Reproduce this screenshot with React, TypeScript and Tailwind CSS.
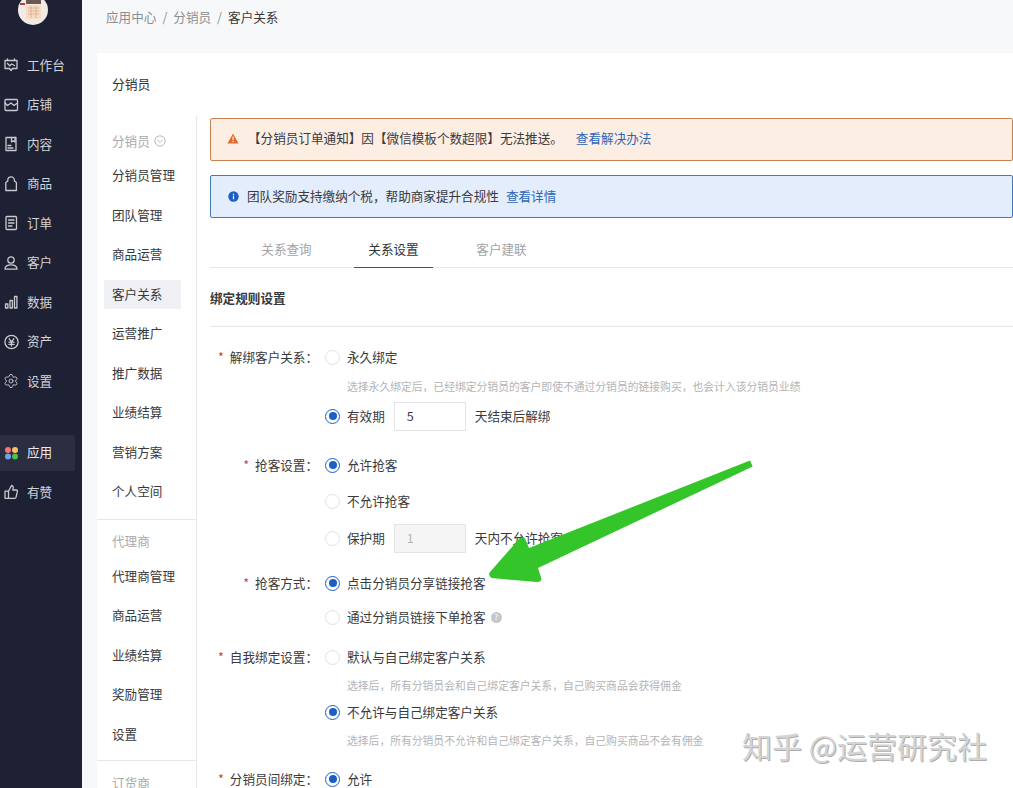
import React from "react";
import { Settings } from "lucide-react";

const stroke = { fill: "none", stroke: "#c9cad0", strokeWidth: 1.3, strokeLinejoin: "round" as const, strokeLinecap: "round" as const };

function Ico({ children }: { children: React.ReactNode }) {
  return (
    <svg width="16" height="16" viewBox="0 0 16 16" className="shrink-0" {...stroke}>
      {children}
    </svg>
  );
}

const side: { label: string; icon: React.ReactNode; active?: boolean; gap?: boolean }[] = [
  { label: "工作台", icon: <Ico><path d="M2 3.5h12v8H9.5l-1.5 2-1.5-2H2z" /><path d="M4.5 1.8v1.7M11.5 1.8v1.7M4.5 6.5l2.2 2.3 2-1.8 2.8 1.5" /></Ico> },
  { label: "店铺", icon: <Ico><rect x="2" y="2.5" width="12.5" height="11" rx="1" /><path d="M2 6l2.5 2.5L8 6l3 2.5L14.5 6" /></Ico> },
  { label: "内容", icon: <Ico><path d="M3 1.5h10v13H3z" /><path d="M8.5 1.5v4.5l1.8-1.2 1.7 1.2V1.5M5 9.5h3M5 12h5" /></Ico> },
  { label: "商品", icon: <Ico><path d="M2.8 14.5h10.6V6.5l-2-1.5V4.2a3.3 3.3 0 0 0-6.6 0V5l-2 1.5z" /></Ico> },
  { label: "订单", icon: <Ico><rect x="3" y="1.5" width="10.5" height="13" rx="1" /><path d="M5.5 5h5.5M5.5 8h5.5M5.5 11h3.5" /></Ico> },
  { label: "客户", icon: <Ico><circle cx="8" cy="5" r="3.2" /><path d="M2 14.2c0-3 2.6-4.4 6-4.4s6 1.4 6 4.4z" /></Ico> },
  { label: "数据", icon: <Ico><rect x="2.5" y="10" width="2.4" height="4" /><rect x="7" y="6.5" width="2.4" height="7.5" /><rect x="11.5" y="2.5" width="2.4" height="11.5" /></Ico> },
  { label: "资产", icon: <Ico><circle cx="8.5" cy="8" r="6.6" /><path d="M6.2 4.8l2.3 3 2.3-3M6 8.2h5M6 10.4h5M8.5 8v4" /></Ico> },
  { label: "设置", icon: <Settings size={16} strokeWidth={1.4} color="#c9cad0" className="shrink-0" /> },
  {
    label: "应用",
    active: true,
    gap: true,
    icon: (
      <svg width="16" height="16" viewBox="0 0 16 16" className="shrink-0">
        <circle cx="5" cy="5" r="3" fill="#ef7a6c" />
        <circle cx="12" cy="5" r="3" fill="#f5c26b" />
        <circle cx="5" cy="11.5" r="3" fill="#6ba4f0" />
        <circle cx="12" cy="11.5" r="3" fill="#4cc04c" />
      </svg>
    ),
  },
  { label: "有赞", icon: <Ico><path d="M5.5 7.2L8.5 1.5c1.2 0 1.9.9 1.7 2L9.8 6h3.6c.8 0 1.2.7 1 1.4l-1.4 6c-.2.6-.6.9-1.2.9H5.5z" /><path d="M5.5 7.2H2v7.1h3.5" /></Ico> },
];

function Sub({ label, active }: { label: string; active?: boolean }) {
  return (
    <div className="h-[39.5px] shrink-0 flex items-center pl-[7px]">
      <div className={`w-[77px] h-[29px] flex items-center pl-[8px] text-[12.6px] text-[#38383b] ${active ? "bg-[#eff0f3]" : ""}`}>{label}</div>
    </div>
  );
}

function Radio({ on }: { on?: boolean }) {
  return (
    <span className={`w-[15px] h-[15px] rounded-full shrink-0 flex items-center justify-center bg-white ${on ? "border-[1.5px] border-[#1c5fc4]" : "border border-[#dfe1e4]"}`}>
      {on && <span className="w-[8px] h-[8px] rounded-full bg-[#1c5fc4]" />}
    </span>
  );
}

function Opt({ on, children, className }: { on?: boolean; children: React.ReactNode; className: string }) {
  return (
    <div className={`flex items-center gap-[7px] text-[12.6px] text-[#3a3a3d] ${className}`}>
      <Radio on={on} />
      {children}
    </div>
  );
}

function Help({ children, className }: { children: React.ReactNode; className: string }) {
  return <div className={`h-[18px] pl-[22px] flex items-center text-[10.8px] text-[#b4b4b6] whitespace-nowrap ${className}`}>{children}</div>;
}

function Field({ label, children, className }: { label: string; children: React.ReactNode; className: string }) {
  return (
    <div className={`flex ${className}`}>
      <div className="w-[108px] h-[24px] shrink-0 flex items-center justify-end text-[12.6px] text-[#3a3a3d] whitespace-nowrap">
        <span className="text-[#c8413b] mr-[6px]">*</span>
        {label}：
      </div>
      <div className="ml-[7px] flex-1 min-w-0">{children}</div>
    </div>
  );
}

function Box({ value, disabled }: { value: string; disabled?: boolean }) {
  return (
    <div className={`w-[72px] h-[29px] border border-[#e3e4e6] flex items-center pl-[12px] text-[12.6px] ml-[2px] ${disabled ? "bg-[#f5f5f5] text-[#b5b5b7]" : "bg-white text-[#3a3a3d]"}`}>
      {value}
    </div>
  );
}

export default function App() {
  const font = { fontFamily: '"Noto Sans CJK SC", "Liberation Sans", sans-serif' };
  return (
    <div className="relative w-[1013px] h-[788px] overflow-hidden flex bg-[#f7f8fa]" style={font}>
      <aside className="w-[82px] shrink-0 bg-[#1e2033] flex flex-col">
        <div className="h-[45.5px] shrink-0 pl-[18px]">
          <svg width="30" height="26" viewBox="0 0 30 26" className="block">
            <circle cx="15" cy="10" r="15" fill="#f1ebe6" />
            <rect x="8" y="0" width="15" height="4" fill="#6d5a4e" />
            <rect x="8" y="5" width="15" height="14" fill="#f6dcc4" />
            <path d="M10 8h11M10 11h11M10 14h11M13 6v12M18 6v12" stroke="#d9a488" strokeWidth="0.7" />
            <rect x="2" y="3" width="5" height="2" fill="#a5453e" />
          </svg>
        </div>
        {side.map((s) => (
          <div key={s.label} className={`${s.gap ? "mt-[32px]" : ""} h-[39.5px] shrink-0 flex items-center`}>
            <div className={`w-[75px] h-[36px] flex items-center pl-[3px] gap-[8px] text-[12.6px] text-[#d2d3d8] ${s.active ? "bg-[#2b2d40] rounded-r-[2px] text-[#e9e9ec]" : ""}`}>
              {s.icon}
              <span>{s.label}</span>
            </div>
          </div>
        ))}
      </aside>

      <main className="flex-1 min-w-0 flex flex-col">
        <div className="h-[53px] shrink-0 pt-[8px] pl-[24px] text-[12.6px] text-[#8d8e92] flex gap-[6px] items-start whitespace-nowrap">
          <span>应用中心</span>
          <span>/</span>
          <span>分销员</span>
          <span>/</span>
          <span className="text-[#3a3a3d]">客户关系</span>
        </div>

        <div className="ml-[15px] flex-1 bg-white min-h-0 flex flex-col">
          <div className="h-[63px] shrink-0 pl-[15px] pb-[2px] flex items-center text-[12.8px] text-[#323233]">分销员</div>
          <div className="flex-1 flex min-h-0">
            <nav className="w-[100px] shrink-0 border-r border-[#e6e6e8] flex flex-col">
              <div className="h-[40px] shrink-0 pt-[10px] pl-[15px] flex items-center gap-[4px] text-[12.6px] text-[#a9a9ac]">
                分销员
                <svg width="12" height="12" viewBox="0 0 12 12" fill="none" stroke="#b0b0b3" strokeWidth="0.9">
                  <circle cx="6" cy="6" r="5.2" />
                  <path d="M3.5 5l2.5 2.5L8.5 5" />
                </svg>
              </div>
              {["分销员管理", "团队管理", "商品运营"].map((l) => <Sub key={l} label={l} />)}
              <Sub label="客户关系" active />
              {["运营推广", "推广数据", "业绩结算", "营销方案", "个人空间"].map((l) => <Sub key={l} label={l} />)}
              <div className="mt-[7px] shrink-0 border-t border-[#e6e6e8] h-[38px] pt-[6px] pl-[15px] flex items-center text-[12.6px] text-[#a9a9ac]">代理商</div>
              {["代理商管理", "商品运营", "业绩结算", "奖励管理", "设置"].map((l) => <Sub key={l} label={l} />)}
              <div className="mt-[6px] shrink-0 border-t border-[#e6e6e8] h-[42px] pt-[4px] pl-[15px] flex items-center text-[12.6px] text-[#a9a9ac]">订货商</div>
            </nav>

            <section className="flex-1 min-w-0 pl-[13px] pt-[2px]">
              <div className="h-[43px] pb-[3px] border border-[#c9814f] rounded-[2px] bg-[#fdeee4] flex items-center pl-[16px] text-[12.6px] text-[#3a3a3d] whitespace-nowrap">
                <svg width="12" height="11" viewBox="0 0 12 11" className="shrink-0">
                  <path d="M6 0.5L11.6 10.5H0.4z" fill="#e56a2a" />
                  <rect x="5.4" y="3.6" width="1.2" height="3.6" fill="#fdeee4" />
                  <rect x="5.4" y="8" width="1.2" height="1.2" fill="#fdeee4" />
                </svg>
                <span className="ml-[9px]">【分销员订单通知】因【微信模板个数超限】无法推送。</span>
                <span className="ml-[13px] text-[#2f66b5]">查看解决办法</span>
              </div>
              <div className="mt-[14px] h-[43px] pb-[1px] border border-[#4479b8] rounded-[2px] bg-[#e4edfb] flex items-center pl-[17px] text-[12.6px] text-[#3a3a3d] whitespace-nowrap">
                <svg width="11" height="11" viewBox="0 0 11 11" className="shrink-0">
                  <circle cx="5.5" cy="5.5" r="5.2" fill="#1c5fc4" />
                  <rect x="4.9" y="4.6" width="1.2" height="3.6" fill="#fff" />
                  <rect x="4.9" y="2.8" width="1.2" height="1.2" fill="#fff" />
                </svg>
                <span className="ml-[8px]">团队奖励支持缴纳个税，帮助商家提升合规性</span>
                <span className="ml-[7px] text-[#2f66b5]">查看详情</span>
              </div>

              <div className="mt-[13px] h-[37px] border-b border-[#e6e6e8] flex pl-[37px] text-[12.6px] whitespace-nowrap">
                <div className="w-[79px] h-[37px] flex items-center justify-center text-[#a3a3a6]">关系查询</div>
                <div className="ml-[28px] w-[79px] h-[37px] flex items-center justify-center text-[#323233] border-b border-[#1c5f9c]">关系设置</div>
                <div className="ml-[29px] w-[79px] h-[37px] flex items-center justify-center text-[#a3a3a6]">客户建联</div>
              </div>

              <div className="h-[59px] pt-[2px] border-b border-[#e6e6e8] flex items-center text-[12.6px] font-bold text-[#38383b]">绑定规则设置</div>

              <div className="pt-[18px]">
                <Field label="解绑客户关系" className="">
                  <Opt className="h-[24px]"><span>永久绑定</span></Opt>
                  <Help className="mt-[8px]">选择永久绑定后，已经绑定分销员的客户即使不通过分销员的链接购买，也会计入该分销员业绩</Help>
                  <Opt on className="mt-[6px] h-[30px]">
                    <span>有效期</span>
                    <Box value="5" />
                    <span className="ml-[2px]">天结束后解绑</span>
                  </Opt>
                </Field>

                <Field label="抢客设置" className="mt-[22px]">
                  <Opt on className="h-[24px]"><span>允许抢客</span></Opt>
                  <Opt className="mt-[12px] h-[24px]"><span>不允许抢客</span></Opt>
                  <Opt className="mt-[10px] h-[30px]">
                    <span>保护期</span>
                    <Box value="1" disabled />
                    <span className="ml-[2px]">天内不允许抢客</span>
                  </Opt>
                </Field>

                <Field label="抢客方式" className="mt-[18px]">
                  <Opt on className="h-[24px]"><span>点击分销员分享链接抢客</span></Opt>
                  <Opt className="mt-[10px] h-[24px]">
                    <span>通过分销员链接下单抢客</span>
                    <span className="-ml-[2px] w-[11px] h-[11px] rounded-full bg-[#c6c7ca] text-white text-[8px] flex items-center justify-center">?</span>
                  </Opt>
                </Field>

                <Field label="自我绑定设置" className="mt-[16px]">
                  <Opt className="h-[24px]"><span>默认与自己绑定客户关系</span></Opt>
                  <Help className="mt-[7px]">选择后，所有分销员会和自己绑定客户关系，自己购买商品会获得佣金</Help>
                  <Opt on className="mt-[6px] h-[24px]"><span>不允许与自己绑定客户关系</span></Opt>
                  <Help className="mt-[7px]">选择后，所有分销员不允许和自己绑定客户关系，自己购买商品不会有佣金</Help>
                </Field>

                <Field label="分销员间绑定" className="mt-[18px]">
                  <Opt on className="h-[24px]"><span>允许</span></Opt>
                </Field>
              </div>
            </section>
          </div>
        </div>
      </main>

      <svg width="1013" height="788" viewBox="0 0 1013 788" className="absolute inset-0 pointer-events-none">
        <path
          d="M750 460.5L752.7 466.5L538 568L541.5 579Q541 582 537 582L491.5 578Q487.5 575 490 572L519 539Q522 536 525 538.5L529 548Z"
          fill="#33c52a"
        />
      </svg>
      <div className="absolute left-[742px] top-[723px] text-[30px] leading-[44px] whitespace-nowrap text-[#d4d4d4] [text-shadow:1px_1px_0_#aeaeae]">
        知乎 @运营研究社
      </div>
    </div>
  );
}
